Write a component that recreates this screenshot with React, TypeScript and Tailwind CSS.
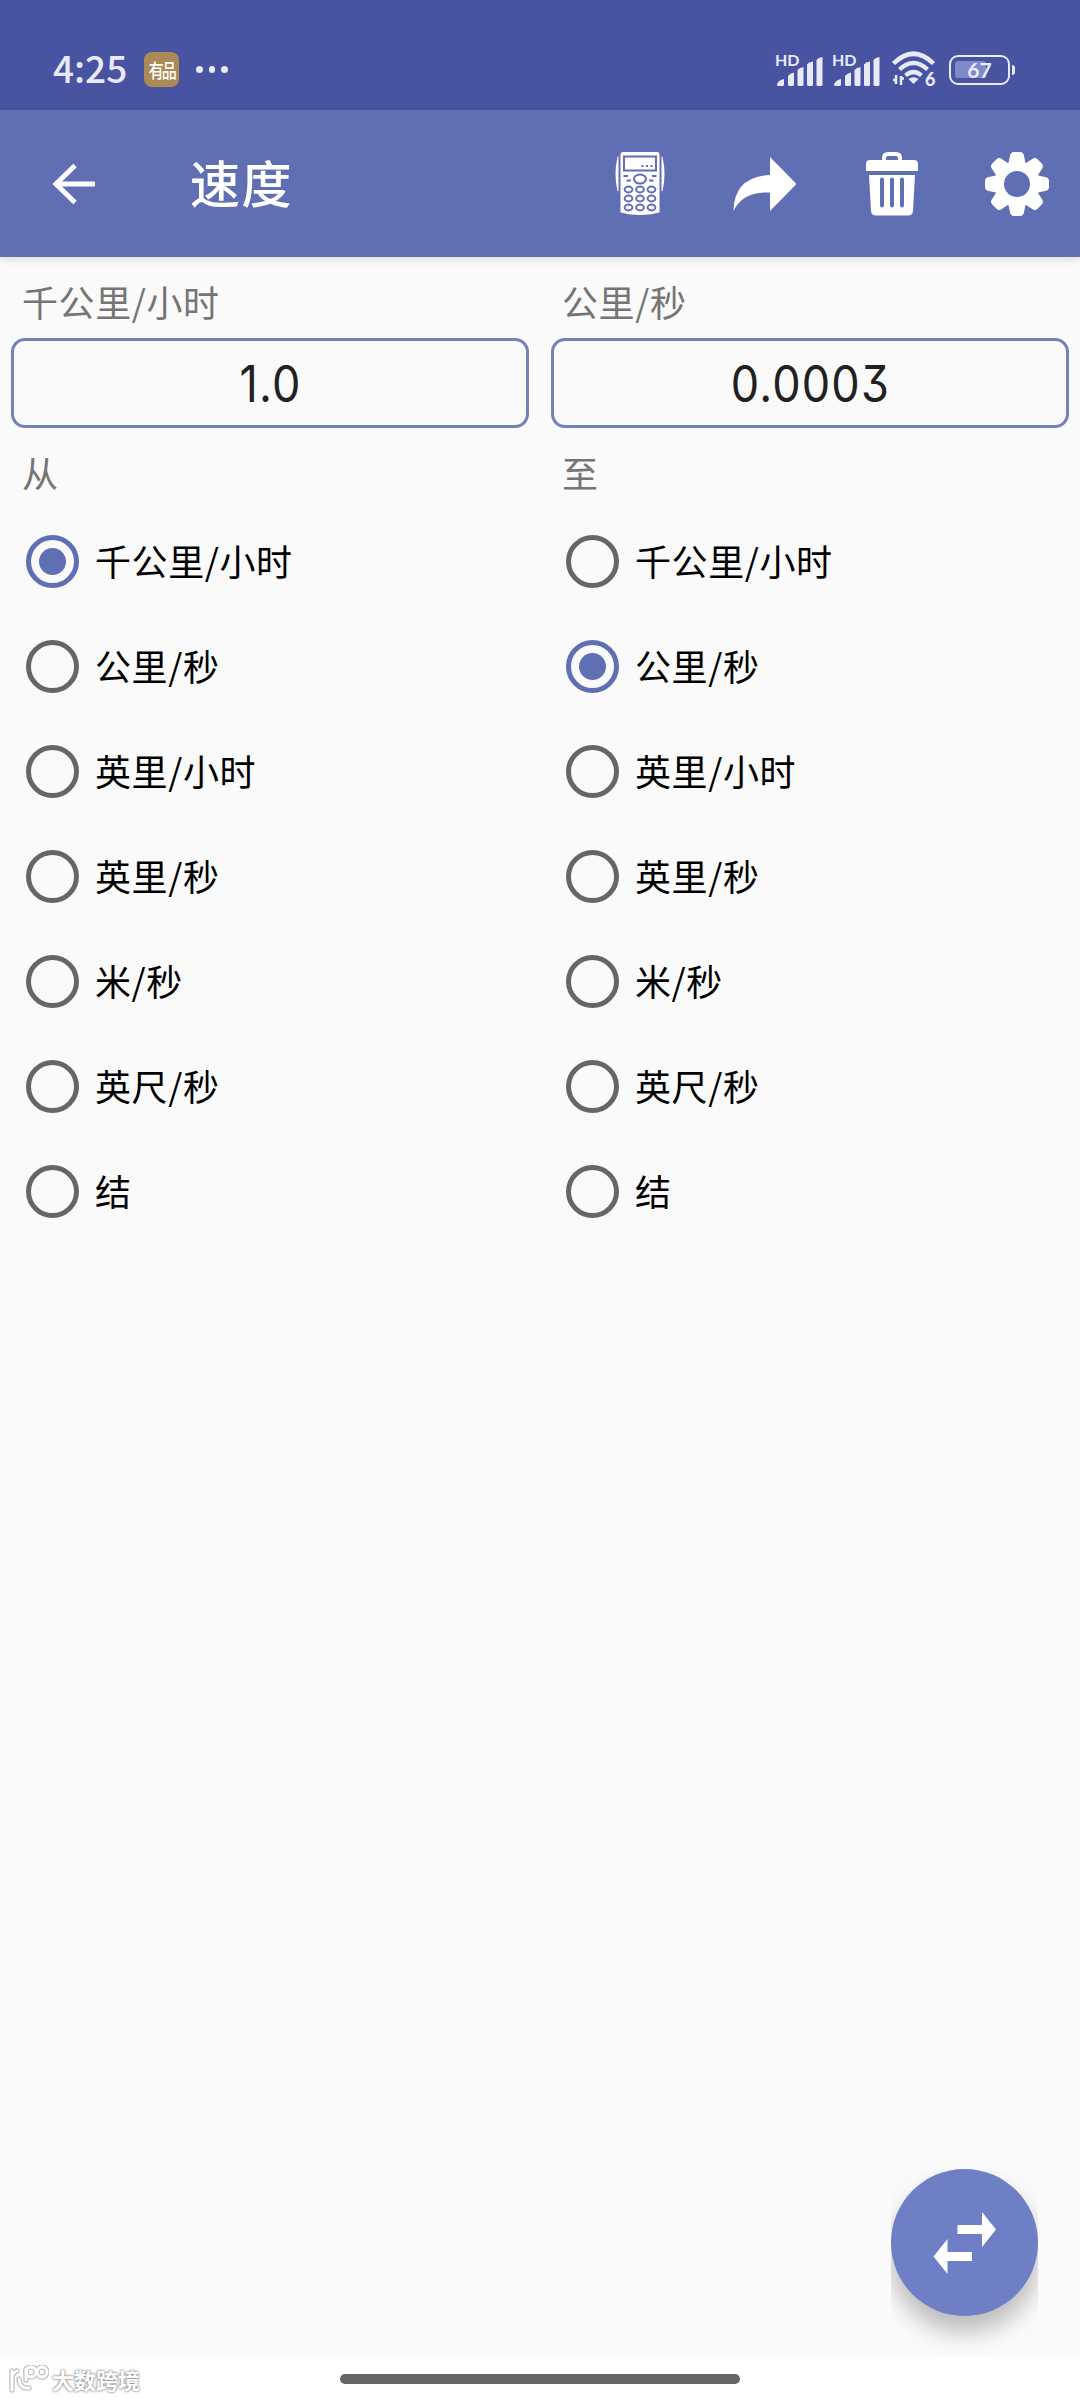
import React, { useState } from "react";

const units = ["千公里/小时", "公里/秒", "英里/小时", "英里/秒", "米/秒", "英尺/秒", "结"];

function Signal() {
  return (
    <svg width="50" height="38" viewBox="-1 -4 50 38" fill="#e8eafc">
      <text x="-1" y="10.500" fontSize="16" fontWeight="700" fontFamily="Lato, sans-serif">HD</text>
      <path d="M1 31v-2q2-4 7-5v5.500q0 1.500-1.500 1.500H2.500Q1 31 1 29.500z" />
      <path d="M12 21q2-3 6-3.500V29.500q0 1.500-1.500 1.500h-3Q12 31 12 29.500z" />
      <path d="M21.500 15q2-2.500 6-3V29.500q0 1.500-1.500 1.500h-3q-1.500 0-1.500-1.500z" />
      <path d="M31 9.500q2-2.500 6-3V29.500q0 1.500-1.500 1.500h-3q-1.500 0-1.500-1.500z" />
      <path d="M40.500 5q2-2.500 6-3V29.500q0 1.500-1.500 1.500h-3q-1.500 0-1.500-1.500z" />
    </svg>
  );
}

function Wifi() {
  return (
    <svg width="46" height="42" viewBox="0 -2 46 42" fill="none" stroke="#e8eafc">
      <path d="M2.500 12.500Q22.500-7 42.500 12.500" strokeWidth="4.500" />
      <path d="M8.500 18.500q14-13 28 0" strokeWidth="4.200" />
      <path d="M14.500 24.500q8-7 16 0" strokeWidth="4.200" />
      <path d="M17.500 28q5-3.500 10 0l-5 5z" fill="#e8eafc" stroke="none" />
      <path d="M2 29h3.500M5 24v9M10 34v-9M10 27.500h3" strokeWidth="2.500" />
      <text x="34" y="34.500" fontSize="18" fontWeight="900" fontFamily="Lato, sans-serif" fill="#e8eafc" stroke="none">6</text>
    </svg>
  );
}

function Calculator() {
  return (
    <svg width="50" height="64" viewBox="0 0 50 64" fill="#fff">
      <path d="M5.500 2.500q0-2.500 2.500-2.500h34q2.500 0 2.500 2.500v58q-19.500 5-39 0z" />
      <path d="M3.500 4v35H2.500Q-1.500 22 2.500 5zM46.500 4v35h1Q51.500 22 47.500 5z" />
      <g fill="none" stroke="#606fb4" strokeWidth="2">
        <path d="M9 4.500h32v14H9z" />
        <ellipse cx="25" cy="27" rx="6" ry="4.500" />
        <path d="M8.500 24h4.500M11.500 28.500H16M37 24h4.500M34 28.500h4.500" />
        {[37.500, 46.500, 55.500].map((y) =>
          [13.500, 25, 36.500].map((x) => <ellipse key={`${x}-${y}`} cx={x} cy={y} rx="3.900" ry="2.900" />)
        )}
      </g>
      <path d="M26.500 13h2v2h-2zM31 13h2v2h-2zM35.500 13h2v2h-2z" fill="#606fb4" />
    </svg>
  );
}

function Share() {
  return (
    <svg width="64" height="54" viewBox="0 0 64 54" fill="#fff">
      <path d="M37 0l26.500 27L37 54V35.500Q10 34 .500 54 1 20 37 18z" />
    </svg>
  );
}

function Trash() {
  return (
    <svg width="52" height="64" viewBox="0 0 52 64" fill="#fff">
      <path d="M4 8h12V6q0-6 6-6h8q6 0 6 6v2h12q4 0 4 4v7H0v-7q0-4 4-4zM20 8h12V6q0-2-2-2h-8q-2 0-2 2z" fillRule="evenodd" />
      <path d="M3 23h46l-2 36q-.500 4.500-5 4.500H10Q5.500 63.500 5 59z" />
      <path d="M16 27.500v26M26 27.500v26M36 27.500v26" stroke="#606fb4" strokeWidth="4" strokeLinecap="round" />
    </svg>
  );
}

function Gear() {
  return (
    <svg width="64" height="64" viewBox="-32 -32 64 64">
      <g fill="#fff">
        {[0, 45, 90, 135].map((a) => (
          <path
            key={a}
            transform={`rotate(${a})`}
            d="M-7-28Q-6.500-32-3-32H3Q6.500-32 7-28L8.500-21V21L7 28Q6.500 32 3 32H-3Q-6.500 32-7 28L-8.500 21V-21z"
          />
        ))}
        <circle r="23" />
      </g>
      <circle r="13" fill="#606fb4" />
    </svg>
  );
}

function Column({ title, value, heading, selected, onSelect }: {
  title: string;
  value: string;
  heading: string;
  selected: number;
  onSelect: (i: number) => void;
}) {
  return (
    <section className="w-1/2">
      <h2 className="mt-[18px] h-[63px] pl-[22px] text-[36px] leading-[52px] tracking-[0.6px] text-[#757575]">{title}</h2>
      <div className="mx-[11px] flex h-[90px] items-center justify-center rounded-[14px] border-3 border-[#7382b8] font-['Inter',sans-serif] text-[50px] text-[#212121] [font-feature-settings:'cv09']">
        <span className="mt-[2px] scale-x-90 tracking-[1.300px]">{value}</span>
      </div>
      <h3 className="mt-[18px] h-[63px] pl-[22px] text-[36px] leading-[52px] text-[#757575]">{heading}</h3>
      <ul>
        {units.map((unit, i) => (
          <li key={unit} onClick={() => onSelect(i)} className="flex h-[105px] cursor-pointer items-center pl-[26px]">
            <span className={`flex size-[53px] items-center justify-center rounded-full border-[5.500px] ${i === selected ? "border-[#606fb4]" : "border-[#666666]"}`}>
              {i === selected && <span className="size-[27px] rounded-full bg-[#606fb4]" />}
            </span>
            <span className="mb-[3px] ml-4 text-[36px] leading-[52px] tracking-[0.6px] text-black">{unit}</span>
          </li>
        ))}
      </ul>
    </section>
  );
}

export default function App() {
  const [from, setFrom] = useState(0);
  const [to, setTo] = useState(1);

  return (
    <div className="flex h-[2400px] w-[1080px] flex-col overflow-hidden bg-[#fafafa] font-['Noto_Sans_CJK_SC',sans-serif]">
      {/* Status bar */}
      <div className="flex h-[110px] shrink-0 items-center bg-[#4853a2] pt-[29px] pr-[65px] pl-[53px] text-[#e8eafc]">
        <span className="mb-[4px] text-[37px] leading-none font-medium">4:25</span>
        <span className="ml-[17px] flex size-[35px] items-center justify-center rounded-lg bg-[#ab8a55] text-white">
          <span className="scale-y-125 text-[15px] leading-none font-medium tracking-[-2px]">有品</span>
        </span>
        <span className="ml-[17px] flex gap-[6px]">
          <i className="size-[6.500px] rounded-full bg-[#e8eafc]" />
          <i className="size-[6.500px] rounded-full bg-[#e8eafc]" />
          <i className="size-[6.500px] rounded-full bg-[#e8eafc]" />
        </span>
        <div className="ml-auto flex items-center">
          <Signal />
          <span className="ml-[7px]"><Signal /></span>
          <span className="ml-[9px]"><Wifi /></span>
          <span className="relative ml-[12px] flex h-[30px] w-[61px] items-center justify-center rounded-[9px] border-[2.500px] border-[#e8eafc] font-['Lato',sans-serif] text-[21px] leading-none font-bold">
            <span className="absolute top-[4px] left-[4px] h-[17px] w-[31px] rounded-[3px] bg-[#8089c8]" />
            <span className="relative">67</span>
          </span>
          <span className="ml-[2px] h-[10px] w-[3px] rounded-r bg-[#e8eafc]" />
        </div>
      </div>

      {/* Toolbar */}
      <header className="relative flex h-[147px] shrink-0 items-center bg-[#606fb4] pr-[31px] pl-[52px] text-white shadow-[0_2px_8px_rgba(0,0,0,0.14)]">
        <svg width="44" height="42" viewBox="0 0 44 42" fill="none" stroke="#fff" strokeWidth="5">
          <path d="M23 2.500L4 21l19 18.500M3 21h40" />
        </svg>
        <h1 className="mb-[5px] ml-[94px] text-[50px] leading-none font-medium tracking-[1.500px]">速度</h1>
        <div className="ml-auto flex items-center">
          <Calculator />
          <span className="ml-[68px]"><Share /></span>
          <span className="ml-[69px]"><Trash /></span>
          <span className="ml-[67px]"><Gear /></span>
        </div>
      </header>

      <main className="flex flex-1">
        <Column title="千公里/小时" value="1.0" heading="从" selected={from} onSelect={setFrom} />
        <Column title="公里/秒" value="0.0003" heading="至" selected={to} onSelect={setTo} />
      </main>

      {/* Swap button, its shadow is cut at the sides */}
      <div className="mr-[42px] h-[188px] self-end [clip-path:inset(0_0_0_0)]">
        <button className="flex size-[147px] items-center justify-center rounded-full bg-[#6f7fc6] shadow-[0_16px_24px_rgba(0,0,0,0.26)]">
          <svg width="64" height="62" viewBox="0 0 64 62" fill="#fff">
            <path d="M24.500 13H49V0l14 17.500L49 35V22H24.500zM39 40H14.500V27L.500 44.500l14 17.500V49H39z" />
          </svg>
        </button>
      </div>

      {/* Navigation bar */}
      <footer className="flex h-[43px] shrink-0 items-center bg-white pl-[9px]">
        <div className="flex w-[331px] items-center">
          <svg width="40" height="28" viewBox="0 0 40 28" fill="none" strokeLinecap="round">
            <g stroke="#c4c4c4" strokeWidth="5.500">
              <path d="M3 25V6M3 12q1-5 5-6M10 14q1 10 10 9M17 15V4" />
              <circle cx="22" cy="7" r="5" />
              <circle cx="33" cy="7" r="5" />
            </g>
            <g stroke="#fff" strokeWidth="2.800">
              <path d="M3 25V6M3 12q1-5 5-6M10 14q1 10 10 9M17 15V4" />
              <circle cx="22" cy="7" r="5" />
              <circle cx="33" cy="7" r="5" />
            </g>
          </svg>
          <span className="ml-[3px] text-[22px] leading-none font-bold text-white [text-shadow:0_0_2px_#888,0_0_3px_#888]">大数跨境</span>
        </div>
        <div className="h-[10px] w-[400px] rounded-full bg-[#666666]" />
      </footer>
    </div>
  );
}
